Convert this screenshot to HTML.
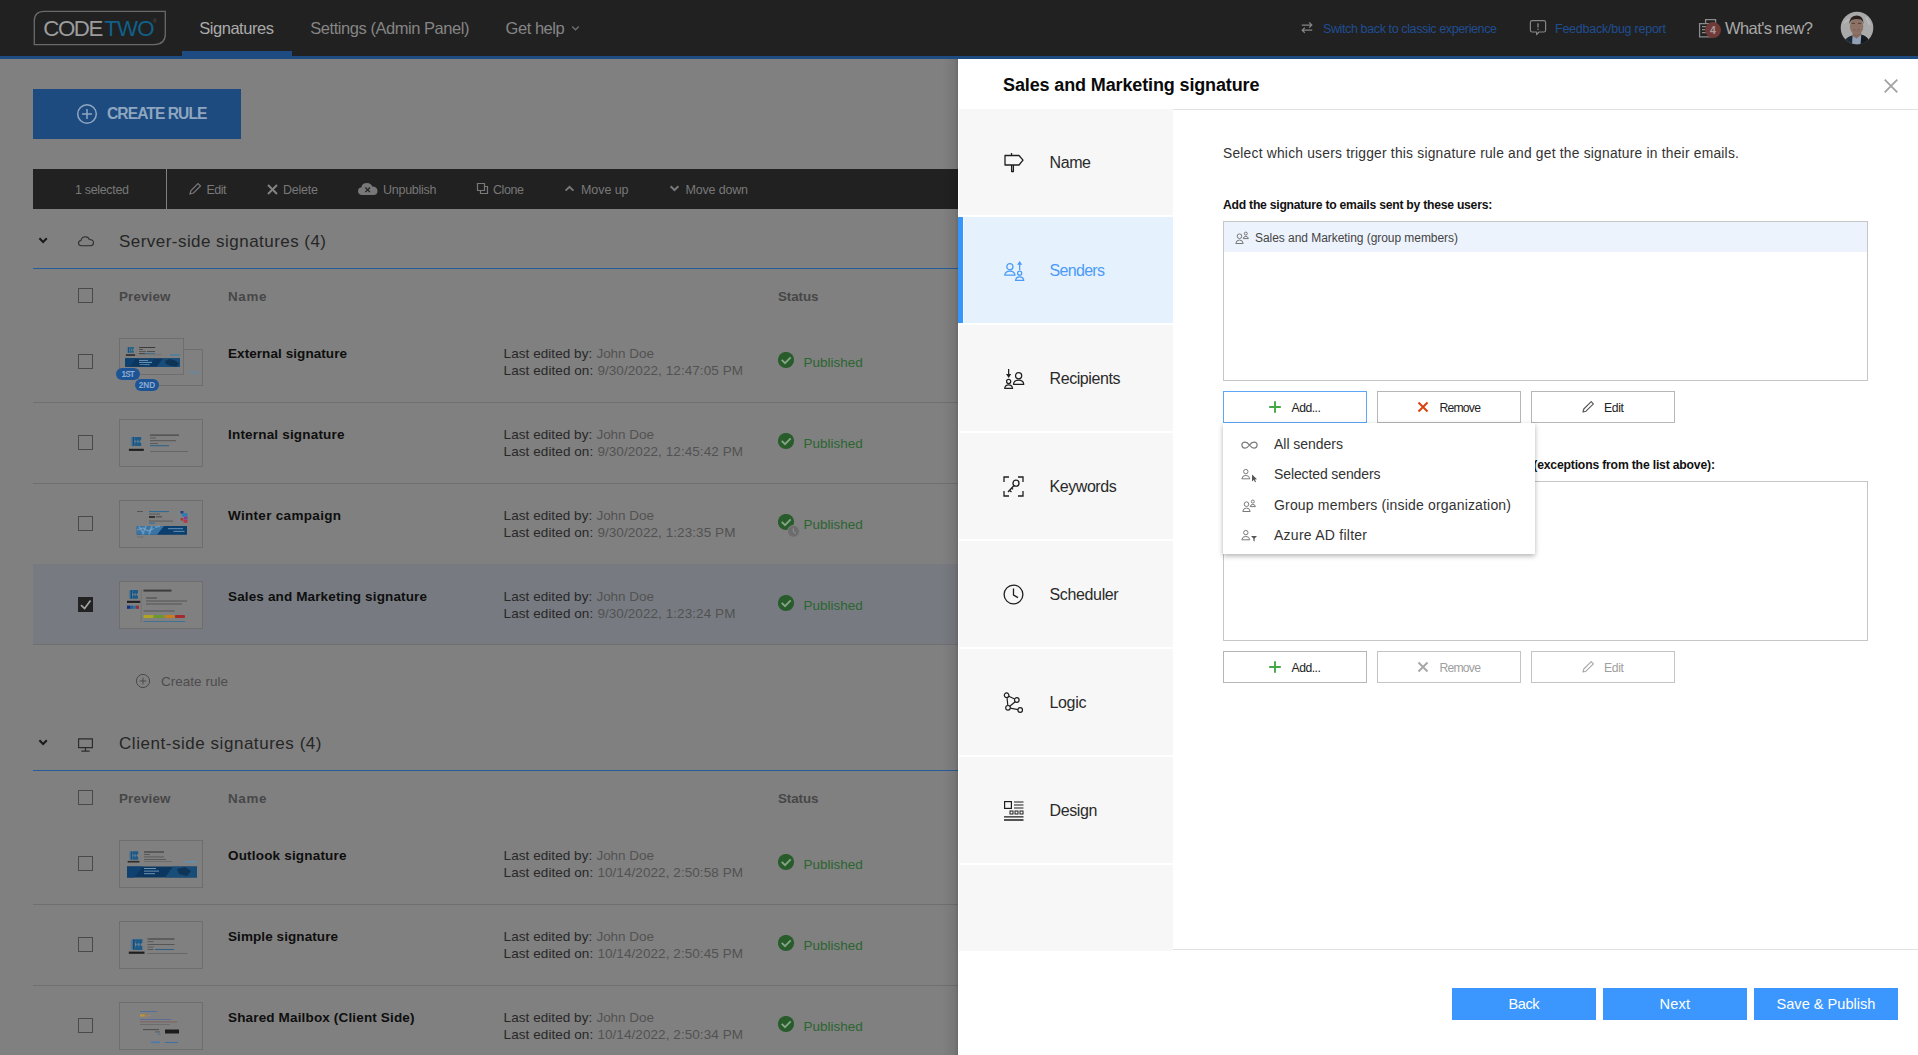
<!DOCTYPE html>
<html lang="en"><head><meta charset="utf-8"><title>CodeTwo Email Signatures - Sales and Marketing signature</title>
<style>
html,body{margin:0;padding:0;}
body{width:1918px;height:1055px;overflow:hidden;position:relative;background:#808080;font-family:"Liberation Sans",sans-serif;}
.t{position:absolute;white-space:nowrap;}
#hdr{position:absolute;left:0;top:0;width:1918px;height:56px;background:#212121;}
#hline{position:absolute;left:0;top:56px;width:1918px;height:3px;background:#1e4c82;}
#panel{position:absolute;left:958px;top:59px;width:960px;height:996px;background:#fff;}
#pshadow{position:absolute;left:942px;top:59px;width:16px;height:996px;background:linear-gradient(to right,rgba(0,0,0,0) 0%,rgba(0,0,0,0.04) 45%,rgba(0,0,0,0.07) 75%,rgba(0,0,0,0.11) 88%,rgba(0,0,0,0.19) 100%);}
.cb{position:absolute;width:13px;height:13px;border:1px solid #4a4a4a;background:#808080;}
.rowline{position:absolute;left:33px;width:925px;height:1px;background:#6f6f6f;}
.thumb{position:absolute;width:82px;height:45px;border:1px solid #6e6e6e;background:#808080;overflow:hidden;}
.nav{position:absolute;left:959px;width:214px;height:106px;background:#f7f7f7;}
.btn{position:absolute;height:30px;border:1px solid #b4b4b4;background:#fff;}
.lb{position:absolute;left:1223px;width:643px;height:158px;border:1px solid #c6c6c6;background:#fff;}
.bb{position:absolute;top:988px;height:32px;width:144px;background:#3b97fd;}
</style></head><body>
<div id="hdr"></div><div id="hline"></div>
<svg style="position:absolute;left:33px;top:10px;" width="134" height="36" viewBox="0 0 134 36" fill="none"><path d="M11.2 1.3 H132.3 V24 Q132.3 34.6 121 34.6 H1.3 V11 Q1.3 1.3 11.2 1.3 Z" stroke="#6a6a6a" stroke-width="1.3"/></svg>
<span class="t" style="left:43.2px;top:13.4px;font-size:22.3px;line-height:31px;color:#9c9c9c;letter-spacing:-1.410px;">CODE</span>
<span class="t" style="left:104.3px;top:13.4px;font-size:22.3px;line-height:31px;color:#10608a;letter-spacing:-0.857px;">TWO</span>
<span class="t" style="left:153.0px;top:17.5px;font-size:5px;line-height:7px;color:#555;">®</span>
<div style="position:absolute;left:182px;top:51px;width:110px;height:5px;background:#1e4c82;"></div>
<span class="t" style="left:199.3px;top:17.0px;font-size:16.5px;line-height:23px;color:#ababab;letter-spacing:-0.476px;">Signatures</span>
<span class="t" style="left:310.3px;top:17.0px;font-size:16.5px;line-height:23px;color:#858585;letter-spacing:-0.455px;">Settings (Admin Panel)</span>
<span class="t" style="left:505.6px;top:17.0px;font-size:16.5px;line-height:23px;color:#858585;letter-spacing:-0.468px;">Get help</span>
<svg style="position:absolute;left:571px;top:25px;" width="9" height="7" viewBox="0 0 9 7" fill="none"><path d="M1.2 1.5 L4.5 4.8 L7.8 1.5" stroke="#707070" stroke-width="1.3"/></svg>
<svg style="position:absolute;left:1300px;top:21px;" width="14" height="14" viewBox="0 0 14 14" fill="none"><path d="M1.8 4H11.6M9.2 1.4 11.8 4 9.2 6.6M12.2 9.2H2.4M4.8 6.6 2.2 9.2 4.8 11.8" stroke="#858585" stroke-width="1.25"/></svg>
<span class="t" style="left:1323.0px;top:19.5px;font-size:12.5px;line-height:18px;color:#1f4d92;letter-spacing:-0.381px;">Switch back to classic experience</span>
<svg style="position:absolute;left:1529px;top:19px;" width="18" height="18" viewBox="0 0 18 18" fill="none"><path d="M3.2 1.6H14.8Q16.6 1.6 16.6 3.4V11.2Q16.6 13 14.8 13H10L7.6 15.6V13H3.2Q1.4 13 1.4 11.2V3.4Q1.4 1.6 3.2 1.6Z" stroke="#858585" stroke-width="1.2" stroke-linejoin="round"/><path d="M9 4.2V8.4M9 9.8V11" stroke="#858585" stroke-width="1.4"/></svg>
<span class="t" style="left:1555.0px;top:19.5px;font-size:12.5px;line-height:18px;color:#1f4d92;letter-spacing:-0.242px;">Feedback/bug report</span>
<svg style="position:absolute;left:1697px;top:18px;" width="28" height="22" viewBox="0 0 28 22" fill="none"><path d="M8.6 5.6V1.6H18.6V10M2.6 5.7H14V18.8H2.6Z" stroke="#8c8c8c" stroke-width="1.3"/><path d="M5 8.6H9.5M5 11.6H9.5M5 14.6H9.5" stroke="#8c8c8c" stroke-width="1.1"/><circle cx="16" cy="12.1" r="8" fill="#703a38"/></svg>
<span class="t" style="left:1710.0px;top:22.7px;font-size:10.5px;line-height:15px;color:#a89c9c;font-weight:bold;">4</span>
<span class="t" style="left:1725.0px;top:17.0px;font-size:16.5px;line-height:23px;color:#a8a8a8;letter-spacing:-0.594px;">What&#x27;s new?</span>
<svg style="position:absolute;left:1840px;top:11px;" width="34" height="34" viewBox="0 0 34 34" fill="none"><defs><clipPath id="av"><circle cx="17" cy="17" r="16.3"/></clipPath></defs><g clip-path="url(#av)"><rect width="34" height="34" fill="#a9a9a9"/><path d="M4 12 L9 8 M26 6 L30 14" stroke="#b8b8b8" stroke-width="2"/><path d="M3 34 Q4 26.5 12.5 24.2 L16.5 28 L21 23.5 Q29.5 26 31 34Z" fill="#1b2836"/><path d="M21 23.5 Q29.5 26 31 34 H20Z" fill="#141922"/><path d="M12.6 24 L12 34 H20.5 L21.4 22.5 L16.5 26Z" fill="#93a0b3"/><path d="M12.4 20 L12.8 25 L16.5 27.5 L21 24 L21.2 20Z" fill="#846a5e"/><ellipse cx="16.6" cy="15.4" rx="6.7" ry="8.3" fill="#8d7266"/><path d="M9.6 13.5 Q9 4.6 16.4 4.4 Q23.8 4.4 23.6 13.2 Q22.6 8.6 19.5 8.2 Q13.4 7.2 11.2 9.4 Q10 11 9.6 13.5Z" fill="#2a211e"/><path d="M11.6 12.4 H15 M18 12.4 H21.4" stroke="#5d463c" stroke-width="1.1"/><path d="M13.3 18.8 Q16.6 21.4 19.9 18.6 Q16.6 19.6 13.3 18.8Z" fill="#c9c2bf" stroke="#6a4a40" stroke-width="0.5"/></g></svg>
<div style="position:absolute;left:33px;top:89px;width:208px;height:50px;background:#1d4b7f;"></div>
<svg style="position:absolute;left:76px;top:103px;" width="22" height="22" viewBox="0 0 22 22" fill="none"><circle cx="11" cy="11" r="9.3" stroke="#8fa6c0" stroke-width="1.5"/><path d="M11 6V16M6 11H16" stroke="#8fa6c0" stroke-width="1.5"/></svg>
<span class="t" style="left:107.0px;top:103.3px;font-size:15.6px;line-height:22px;color:#8fa6c0;letter-spacing:-0.928px;font-weight:bold;">CREATE RULE</span>
<div style="position:absolute;left:33px;top:169px;width:925px;height:40px;background:#212121;"></div>
<div style="position:absolute;left:166px;top:169px;width:1px;height:40px;background:#808080;"></div>
<span class="t" style="left:75.0px;top:180.5px;font-size:12.5px;line-height:18px;color:#787878;letter-spacing:-0.331px;">1 selected</span>
<svg style="position:absolute;left:188px;top:182px;" width="14" height="14" viewBox="0 0 14 14" fill="none"><path d="M2 12 L3 8.5 L10 1.5 L12.5 4 L5.5 11 Z" stroke="#787878" stroke-width="1.2"/></svg>
<span class="t" style="left:206.5px;top:180.5px;font-size:12.5px;line-height:18px;color:#787878;letter-spacing:-0.513px;">Edit</span>
<svg style="position:absolute;left:266px;top:183px;" width="13" height="13" viewBox="0 0 13 13" fill="none"><path d="M2 2 L11 11 M11 2 L2 11" stroke="#828282" stroke-width="2"/></svg>
<span class="t" style="left:283.0px;top:180.5px;font-size:12.5px;line-height:18px;color:#787878;letter-spacing:-0.227px;">Delete</span>
<svg style="position:absolute;left:357px;top:181px;" width="22" height="16" viewBox="0 0 22 16" fill="none"><path d="M5.5 14 Q1 14 1 10 Q1 6.8 4.3 6.4 Q5 2 10 2 Q14 2 15.3 5.6 Q20.5 5.8 20.5 10 Q20.5 14 16.5 14Z" fill="#787878"/><path d="M8.3 6.5 L13 11.2 M13 6.5 L8.3 11.2" stroke="#212121" stroke-width="1.2"/></svg>
<span class="t" style="left:383.0px;top:180.5px;font-size:12.5px;line-height:18px;color:#787878;letter-spacing:-0.262px;">Unpublish</span>
<svg style="position:absolute;left:476px;top:182px;" width="13" height="13" viewBox="0 0 13 13" fill="none"><path d="M1.5 1.5H8.5V8.5H1.5Z M4.5 8.5V11.5H11.5V4.5H8.5" stroke="#787878" stroke-width="1.2"/></svg>
<span class="t" style="left:493.0px;top:180.5px;font-size:12.5px;line-height:18px;color:#787878;letter-spacing:-0.415px;">Clone</span>
<svg style="position:absolute;left:563px;top:183px;" width="13" height="11" viewBox="0 0 13 11" fill="none"><path d="M2.6 7.6 L6.5 3.8 L10.4 7.6" stroke="#787878" stroke-width="2"/></svg>
<span class="t" style="left:581.0px;top:180.5px;font-size:12.5px;line-height:18px;color:#787878;letter-spacing:-0.074px;">Move up</span>
<svg style="position:absolute;left:668px;top:183px;" width="13" height="11" viewBox="0 0 13 11" fill="none"><path d="M2.6 3.2 L6.5 7 L10.4 3.2" stroke="#787878" stroke-width="2"/></svg>
<span class="t" style="left:685.5px;top:180.5px;font-size:12.5px;line-height:18px;color:#787878;letter-spacing:-0.178px;">Move down</span>
<svg style="position:absolute;left:37px;top:235px;" width="12" height="10" viewBox="0 0 12 10" fill="none"><path d="M2.4 3.2 L6.1 7 L9.8 3.2" stroke="#1a1a1a" stroke-width="2"/></svg>
<svg style="position:absolute;left:77px;top:235px;" width="18" height="13" viewBox="0 0 18 13" fill="none"><path d="M4.6 10.7 Q1.5 10.7 1.5 8 Q1.5 5.8 4 5.4 Q4.8 1.7 8.4 1.7 Q11.4 1.7 12.4 4.6 Q16.5 4.7 16.5 7.8 Q16.5 10.7 13.6 10.7Z" stroke="#2b2b2b" stroke-width="1.05"/></svg>
<span class="t" style="left:119.0px;top:229.6px;font-size:17px;line-height:24px;color:#262626;letter-spacing:0.457px;">Server-side signatures (4)</span>
<div style="position:absolute;left:33px;top:268px;width:925px;height:1px;background:#245c9c;"></div>
<div class="cb" style="left:78px;top:288px"></div>
<span class="t" style="left:119.0px;top:286.8px;font-size:13.4px;line-height:19px;color:#474747;letter-spacing:0.141px;font-weight:bold;">Preview</span>
<span class="t" style="left:228.0px;top:286.8px;font-size:13.4px;line-height:19px;color:#474747;letter-spacing:0.668px;font-weight:bold;">Name</span>
<span class="t" style="left:778.0px;top:286.8px;font-size:13.4px;line-height:19px;color:#474747;letter-spacing:-0.091px;font-weight:bold;">Status</span>
<svg style="position:absolute;left:37px;top:737px;" width="12" height="10" viewBox="0 0 12 10" fill="none"><path d="M2.4 3.2 L6.1 7 L9.8 3.2" stroke="#1a1a1a" stroke-width="2"/></svg>
<svg style="position:absolute;left:77px;top:736px;" width="18" height="16" viewBox="0 0 18 16" fill="none"><path d="M1.6 2.8H15.4V11.6H1.6Z M8.5 11.6V14.8 M4.4 15.1H12.6" stroke="#2b2b2b" stroke-width="1.15"/></svg>
<span class="t" style="left:119.0px;top:731.6px;font-size:17px;line-height:24px;color:#262626;letter-spacing:0.541px;">Client-side signatures (4)</span>
<div style="position:absolute;left:33px;top:770px;width:925px;height:1px;background:#245c9c;"></div>
<div class="cb" style="left:78px;top:790px"></div>
<span class="t" style="left:119.0px;top:788.8px;font-size:13.4px;line-height:19px;color:#474747;letter-spacing:0.141px;font-weight:bold;">Preview</span>
<span class="t" style="left:228.0px;top:788.8px;font-size:13.4px;line-height:19px;color:#474747;letter-spacing:0.668px;font-weight:bold;">Name</span>
<span class="t" style="left:778.0px;top:788.8px;font-size:13.4px;line-height:19px;color:#474747;letter-spacing:-0.091px;font-weight:bold;">Status</span>
<div class="cb" style="left:78px;top:354px"></div>
<div style="position:absolute;left:138px;top:349px;width:65px;height:37px;border:1px solid #6e6e6e;box-sizing:border-box;background:#808080;"></div><svg style="position:absolute;left:138px;top:349px;" width="65" height="37" viewBox="0 0 65 37" fill="none"><rect x="51" y="22.6" width="10" height="1.7" fill="#5f8aa6" opacity=".85"/></svg><div style="position:absolute;left:119px;top:338px;width:65px;height:37px;border:1px solid #6e6e6e;box-sizing:border-box;background:#808080;"></div><svg style="position:absolute;left:119px;top:338px;" width="65" height="37" viewBox="0 0 65 37" fill="none"><g transform="translate(7.9,9.1) scale(7,5.7)"><rect x="0" y="0.03" width="0.17" height="0.94" fill="#587690"/><rect x="0.17" y="0" width="0.17" height="1" fill="#0d4f85"/><path d="M0.37 0H1V0.3L0.82 0.5 1 0.7V1H0.37V0.7L0.52 0.5 0.37 0.3Z" fill="#1d5f85" opacity=".9"/><path d="M0.52 0.5L0.68 0.3 0.82 0.5 0.68 0.7Z" fill="#6f95b0" opacity=".55"/></g><rect x="6.9" y="16.2" width="9.2" height="1.7" fill="#303030"/><rect x="17.6" y="9" width="0.5" height="9" fill="#777"/><rect x="20" y="9.2" width="16.2" height="0.8" fill="#2a2a2a"/><rect x="20" y="11.1" width="4" height="0.7" fill="#3a3a3a"/><rect x="20" y="13.1" width="7" height="0.7" fill="#444"/><rect x="28" y="13.1" width="8" height="0.7" fill="#383838"/><rect x="20" y="15.2" width="6" height="0.8" fill="#3a3a3a"/><rect x="26" y="15.2" width="10" height="0.8" fill="#2f6a93"/><rect x="20" y="16.6" width="23" height="0.5" fill="#666"/><rect x="51" y="16.2" width="10" height="1.7" fill="#4d809f"/><rect x="6.2" y="20.2" width="54.8" height="8.7" fill="#0a3660"/><path d="M6.2 20.2H17L10.5 28.9H6.2Z" fill="#0e416f"/><path d="M30 20.2H36L29.5 28.9H23.5Z" fill="#0f4474" opacity=".7"/><path d="M44 20.2H61V28.9H37.5Z" fill="#1c5380" opacity=".8"/><path d="M46 23 L51 21 L56 22.5 L60 25.5 L58 28.5 L52 28 L47 26Z" fill="#08243f" opacity=".6"/><rect x="20" y="21.9" width="9" height="0.9" fill="#7aa3c6"/><rect x="20" y="23.9" width="13" height="0.9" fill="#7aa3c6"/><rect x="20.6" y="26.2" width="10" height="0.8" fill="#5f8cb3"/></svg><div style="position:absolute;left:116px;top:368px;width:24px;height:12px;background:#1c5496;border-radius:6px;"></div><span class="t" style="left:121.6px;top:368.7px;font-size:8.2px;line-height:11px;color:#8eabd0;letter-spacing:-0.870px;font-weight:bold;">1ST</span><div style="position:absolute;left:135px;top:379px;width:24px;height:12px;background:#1c5496;border-radius:6px;"></div><span class="t" style="left:138.7px;top:379.6px;font-size:8.2px;line-height:11px;color:#8eabd0;letter-spacing:-0.002px;font-weight:bold;">2ND</span>
<span class="t" style="left:228.0px;top:343.8px;font-size:13.5px;line-height:19px;color:#0e0e0e;letter-spacing:0.071px;font-weight:bold;">External signature</span>
<span class="t" style="left:503.6px;top:343.6px;font-size:13.5px;line-height:19px;color:#282828;letter-spacing:0.056px;">Last edited by:</span>
<span class="t" style="left:596.4px;top:343.6px;font-size:13.5px;line-height:19px;color:#525252;letter-spacing:-0.013px;">John Doe</span>
<span class="t" style="left:503.6px;top:361.1px;font-size:13.5px;line-height:19px;color:#282828;letter-spacing:0.074px;">Last edited on:</span>
<span class="t" style="left:597.4px;top:361.1px;font-size:13.5px;line-height:19px;color:#525252;letter-spacing:0.071px;">9/30/2022, 12:47:05 PM</span>
<svg style="position:absolute;left:778px;top:352px;" width="24" height="24" viewBox="0 0 24 24" fill="none"><circle cx="8" cy="8" r="8.1" fill="#285c2b"/><path d="M3.7 7.9 L7 11.1 L12.7 5.3" stroke="#86a487" stroke-width="1.9"/></svg>
<span class="t" style="left:803.4px;top:352.5px;font-size:13.5px;line-height:19px;color:#2b6530;letter-spacing:0.001px;">Published</span>
<div class="rowline" style="top:402px"></div>
<div class="cb" style="left:78px;top:435px"></div>
<div style="position:absolute;left:119px;top:419px;width:84px;height:48px;border:1px solid #6e6e6e;box-sizing:border-box;background:#808080;"></div><svg style="position:absolute;left:119px;top:419px;" width="84" height="48" viewBox="0 0 84 48" fill="none"><g transform="translate(11.8,17.9) scale(10.4,9.2)"><rect x="0" y="0.03" width="0.17" height="0.94" fill="#587690"/><rect x="0.17" y="0" width="0.17" height="1" fill="#0d4f85"/><path d="M0.37 0H1V0.3L0.82 0.5 1 0.7V1H0.37V0.7L0.52 0.5 0.37 0.3Z" fill="#14568a" opacity=".9"/><path d="M0.52 0.5L0.68 0.3 0.82 0.5 0.68 0.7Z" fill="#6f95b0" opacity=".55"/></g><rect x="9.9" y="29.8" width="14.9" height="2.1" fill="#1e1e1e"/><rect x="31" y="15.6" width="29" height="1" fill="#3a3a3a"/><rect x="31" y="18.5" width="6" height="0.9" fill="#555"/><rect x="31" y="21.2" width="26" height="1" fill="#555"/><rect x="31" y="24" width="8" height="1" fill="#5a5a5a"/><rect x="31" y="26.2" width="19" height="1" fill="#2d5f86"/><rect x="31" y="32" width="38" height="1" fill="#666"/></svg>
<span class="t" style="left:228.0px;top:424.8px;font-size:13.5px;line-height:19px;color:#0e0e0e;letter-spacing:0.190px;font-weight:bold;">Internal signature</span>
<span class="t" style="left:503.6px;top:424.6px;font-size:13.5px;line-height:19px;color:#282828;letter-spacing:0.056px;">Last edited by:</span>
<span class="t" style="left:596.4px;top:424.6px;font-size:13.5px;line-height:19px;color:#525252;letter-spacing:-0.013px;">John Doe</span>
<span class="t" style="left:503.6px;top:442.1px;font-size:13.5px;line-height:19px;color:#282828;letter-spacing:0.074px;">Last edited on:</span>
<span class="t" style="left:597.4px;top:442.1px;font-size:13.5px;line-height:19px;color:#525252;letter-spacing:0.071px;">9/30/2022, 12:45:42 PM</span>
<svg style="position:absolute;left:778px;top:433px;" width="24" height="24" viewBox="0 0 24 24" fill="none"><circle cx="8" cy="8" r="8.1" fill="#285c2b"/><path d="M3.7 7.9 L7 11.1 L12.7 5.3" stroke="#86a487" stroke-width="1.9"/></svg>
<span class="t" style="left:803.4px;top:433.5px;font-size:13.5px;line-height:19px;color:#2b6530;letter-spacing:0.001px;">Published</span>
<div class="rowline" style="top:483px"></div>
<div class="cb" style="left:78px;top:516px"></div>
<div style="position:absolute;left:119px;top:500px;width:84px;height:48px;border:1px solid #6e6e6e;box-sizing:border-box;background:#808080;"></div><svg style="position:absolute;left:119px;top:500px;" width="84" height="48" viewBox="0 0 84 48" fill="none"><rect x="18" y="11" width="6" height="1" fill="#555"/><rect x="30" y="11" width="20" height="1.1" fill="#2d6a96"/><rect x="30" y="13.6" width="11" height="0.9" fill="#555"/><rect x="30" y="16" width="6" height="2" fill="#333"/><rect x="37" y="16.4" width="6" height="0.9" fill="#444"/><rect x="30" y="20.6" width="24" height="0.9" fill="#555"/><rect x="30" y="22.6" width="6" height="1" fill="#2d6a96"/><rect x="59.6" y="11" width="0.6" height="12" fill="#6f8fa6"/><rect x="61.5" y="11" width="3" height="2.6" fill="#273a80"/><rect x="63" y="13.2" width="5.5" height="3.4" fill="#2d7db5"/><rect x="65" y="16.6" width="3.5" height="3" fill="#8a3c8c"/><rect x="61.5" y="18" width="3" height="2.6" fill="#a43b3b"/><rect x="64.5" y="20" width="4" height="2.8" fill="#b03a48"/><rect x="17.8" y="26" width="50.2" height="8.8" fill="#0c3f6d"/><path d="M17.8 26H45L38 34.8H17.8Z" fill="#3a74a4"/><path d="M20 26.5 L25 34 M27 26L23.5 34.5 M33 26 L30 34.5 M36 27 L41 26.2" stroke="#6f9bc0" stroke-width="1.8" opacity=".85"/><path d="M18 30 L24 28 L29 31 L35 28.5" stroke="#86aac8" stroke-width="1.2" opacity=".7"/><rect x="49" y="28" width="15" height="1.2" fill="#5583aa"/><rect x="54.5" y="30.8" width="11" height="1.2" fill="#5583aa"/><rect x="18" y="36.6" width="6.5" height="0.8" fill="#666"/></svg>
<span class="t" style="left:228.0px;top:505.8px;font-size:13.5px;line-height:19px;color:#0e0e0e;letter-spacing:0.311px;font-weight:bold;">Winter campaign</span>
<span class="t" style="left:503.6px;top:505.6px;font-size:13.5px;line-height:19px;color:#282828;letter-spacing:0.056px;">Last edited by:</span>
<span class="t" style="left:596.4px;top:505.6px;font-size:13.5px;line-height:19px;color:#525252;letter-spacing:-0.013px;">John Doe</span>
<span class="t" style="left:503.6px;top:523.1px;font-size:13.5px;line-height:19px;color:#282828;letter-spacing:0.074px;">Last edited on:</span>
<span class="t" style="left:597.4px;top:523.1px;font-size:13.5px;line-height:19px;color:#525252;letter-spacing:0.070px;">9/30/2022, 1:23:35 PM</span>
<svg style="position:absolute;left:778px;top:514px;" width="24" height="24" viewBox="0 0 24 24" fill="none"><circle cx="8" cy="8" r="8.1" fill="#285c2b"/><path d="M3.7 7.9 L7 11.1 L12.7 5.3" stroke="#86a487" stroke-width="1.9"/><circle cx="15.5" cy="17.3" r="5.9" fill="#6c6c6c" stroke="#808080" stroke-width="1"/><path d="M15.3 14.2 V17.6 L17.7 19.5" stroke="#8e8e8e" stroke-width="1.1"/></svg>
<span class="t" style="left:803.4px;top:514.5px;font-size:13.5px;line-height:19px;color:#2b6530;letter-spacing:0.001px;">Published</span>
<div style="position:absolute;left:33px;top:564px;width:925px;height:80px;background:#777b81;"></div>
<div style="position:absolute;left:78px;top:597px;width:15px;height:15px;background:#222;"></div>
<svg style="position:absolute;left:78px;top:597px;" width="15" height="15" viewBox="0 0 15 15" fill="none"><path d="M3 8.1 L6.6 11.5 L12.5 3.6" stroke="#a4a4a4" stroke-width="1.7"/></svg>
<div style="position:absolute;left:119px;top:581px;width:84px;height:48px;border:1px solid #6e6e6e;box-sizing:border-box;background:#808080;"></div><svg style="position:absolute;left:119px;top:581px;" width="84" height="48" viewBox="0 0 84 48" fill="none"><g transform="translate(9.9,9) scale(9.1,8.8)"><rect x="0" y="0.03" width="0.17" height="0.94" fill="#587690"/><rect x="0.17" y="0" width="0.17" height="1" fill="#0d4f85"/><path d="M0.37 0H1V0.3L0.82 0.5 1 0.7V1H0.37V0.7L0.52 0.5 0.37 0.3Z" fill="#14568a" opacity=".9"/><path d="M0.52 0.5L0.68 0.3 0.82 0.5 0.68 0.7Z" fill="#6f95b0" opacity=".55"/></g><rect x="8" y="19.8" width="13.2" height="2.1" fill="#1e1e1e"/><rect x="8" y="24.6" width="3" height="3.2" fill="#152f7a"/><rect x="11" y="24.6" width="3" height="3.2" fill="#1f5f95"/><rect x="14" y="24.6" width="3" height="3.2" fill="#3a6c9c"/><rect x="17" y="24.6" width="3" height="3.2" fill="#9a2f3a"/><rect x="21.8" y="8.5" width="0.6" height="33" fill="#6a6a6a"/><rect x="24.5" y="8.6" width="28" height="2" fill="#3c3c3c"/><rect x="27" y="16.5" width="11" height="1" fill="#444"/><rect x="27" y="19.5" width="41" height="1" fill="#555"/><rect x="27" y="22.5" width="36" height="1" fill="#555"/><rect x="24.5" y="29.5" width="31" height="1" fill="#555"/><rect x="24.5" y="34" width="10" height="3" rx="1" fill="#b0a520"/><rect x="35" y="34" width="10" height="3" rx="1" fill="#6b9a2c"/><rect x="45.5" y="34" width="10" height="3" rx="1" fill="#c4801e"/><rect x="56" y="34" width="10" height="3" rx="1" fill="#a52a2e"/><rect x="24.5" y="40" width="42" height="0.9" fill="#3c6f95"/></svg>
<span class="t" style="left:228.0px;top:586.8px;font-size:13.5px;line-height:19px;color:#0e0e0e;letter-spacing:0.141px;font-weight:bold;">Sales and Marketing signature</span>
<span class="t" style="left:503.6px;top:586.6px;font-size:13.5px;line-height:19px;color:#282828;letter-spacing:0.056px;">Last edited by:</span>
<span class="t" style="left:596.4px;top:586.6px;font-size:13.5px;line-height:19px;color:#525252;letter-spacing:-0.013px;">John Doe</span>
<span class="t" style="left:503.6px;top:604.1px;font-size:13.5px;line-height:19px;color:#282828;letter-spacing:0.074px;">Last edited on:</span>
<span class="t" style="left:597.4px;top:604.1px;font-size:13.5px;line-height:19px;color:#525252;letter-spacing:0.070px;">9/30/2022, 1:23:24 PM</span>
<svg style="position:absolute;left:778px;top:595px;" width="24" height="24" viewBox="0 0 24 24" fill="none"><circle cx="8" cy="8" r="8.1" fill="#285c2b"/><path d="M3.7 7.9 L7 11.1 L12.7 5.3" stroke="#86a487" stroke-width="1.9"/></svg>
<span class="t" style="left:803.4px;top:595.5px;font-size:13.5px;line-height:19px;color:#2b6530;letter-spacing:0.001px;">Published</span>
<div class="rowline" style="top:644px"></div>
<svg style="position:absolute;left:135px;top:673px;" width="16" height="16" viewBox="0 0 16 16" fill="none"><circle cx="8" cy="8" r="6.6" stroke="#4a4a4a" stroke-width="1"/><path d="M8 4.6V11.4M4.6 8H11.4" stroke="#4a4a4a" stroke-width="1"/></svg>
<span class="t" style="left:161.0px;top:672.0px;font-size:13.5px;line-height:19px;color:#4c4c4c;letter-spacing:0.022px;">Create rule</span>
<div class="cb" style="left:78px;top:856px"></div>
<div style="position:absolute;left:119px;top:840px;width:84px;height:48px;border:1px solid #6e6e6e;box-sizing:border-box;background:#808080;"></div><svg style="position:absolute;left:119px;top:840px;" width="84" height="48" viewBox="0 0 84 48" fill="none"><g transform="translate(10.2,11.3) scale(9,8.5)"><rect x="0" y="0.03" width="0.17" height="0.94" fill="#587690"/><rect x="0.17" y="0" width="0.17" height="1" fill="#0d4f85"/><path d="M0.37 0H1V0.3L0.82 0.5 1 0.7V1H0.37V0.7L0.52 0.5 0.37 0.3Z" fill="#14568a" opacity=".9"/><path d="M0.52 0.5L0.68 0.3 0.82 0.5 0.68 0.7Z" fill="#6f95b0" opacity=".55"/></g><rect x="8.7" y="20.9" width="11.7" height="1.6" fill="#2a2a2a"/><rect x="25" y="11.5" width="20" height="1" fill="#333"/><rect x="25" y="14" width="6" height="0.9" fill="#555"/><rect x="25" y="16.5" width="20" height="0.9" fill="#555"/><rect x="25" y="19" width="22" height="0.9" fill="#555"/><rect x="25" y="21.2" width="28" height="0.8" fill="#666"/><rect x="65" y="21" width="13" height="1.6" fill="#5f8fae"/><rect x="8" y="26.5" width="70" height="11" fill="#0a3660"/><path d="M8 26.5H24L15 37.5H8Z" fill="#0e416f"/><path d="M54 26.5H78V37.5H46Z" fill="#1c5380" opacity=".8"/><path d="M58 29 L66 27 L72 31 L68 36 L60 34Z" fill="#08243f" opacity=".6"/><rect x="25" y="28" width="12" height="1" fill="#6f93b3"/><rect x="25" y="30.6" width="15" height="1" fill="#6f93b3"/><rect x="25" y="33.2" width="11" height="1" fill="#6f93b3"/></svg>
<span class="t" style="left:228.0px;top:845.8px;font-size:13.5px;line-height:19px;color:#0e0e0e;letter-spacing:0.187px;font-weight:bold;">Outlook signature</span>
<span class="t" style="left:503.6px;top:845.6px;font-size:13.5px;line-height:19px;color:#282828;letter-spacing:0.056px;">Last edited by:</span>
<span class="t" style="left:596.4px;top:845.6px;font-size:13.5px;line-height:19px;color:#525252;letter-spacing:-0.013px;">John Doe</span>
<span class="t" style="left:503.6px;top:863.1px;font-size:13.5px;line-height:19px;color:#282828;letter-spacing:0.074px;">Last edited on:</span>
<span class="t" style="left:597.4px;top:863.1px;font-size:13.5px;line-height:19px;color:#525252;letter-spacing:0.071px;">10/14/2022, 2:50:58 PM</span>
<svg style="position:absolute;left:778px;top:854px;" width="24" height="24" viewBox="0 0 24 24" fill="none"><circle cx="8" cy="8" r="8.1" fill="#285c2b"/><path d="M3.7 7.9 L7 11.1 L12.7 5.3" stroke="#86a487" stroke-width="1.9"/></svg>
<span class="t" style="left:803.4px;top:854.5px;font-size:13.5px;line-height:19px;color:#2b6530;letter-spacing:0.001px;">Published</span>
<div class="rowline" style="top:904px"></div>
<div class="cb" style="left:78px;top:937px"></div>
<div style="position:absolute;left:119px;top:921px;width:84px;height:48px;border:1px solid #6e6e6e;box-sizing:border-box;background:#808080;"></div><svg style="position:absolute;left:119px;top:921px;" width="84" height="48" viewBox="0 0 84 48" fill="none"><g transform="translate(11.9,18.2) scale(11.5,10.7)"><rect x="0" y="0.03" width="0.17" height="0.94" fill="#587690"/><rect x="0.17" y="0" width="0.17" height="1" fill="#0d4f85"/><path d="M0.37 0H1V0.3L0.82 0.5 1 0.7V1H0.37V0.7L0.52 0.5 0.37 0.3Z" fill="#14568a" opacity=".9"/><path d="M0.52 0.5L0.68 0.3 0.82 0.5 0.68 0.7Z" fill="#6f95b0" opacity=".55"/></g><rect x="9.8" y="30.6" width="15.7" height="2.2" fill="#1e1e1e"/><rect x="28.5" y="17.5" width="27" height="1" fill="#3a3a3a"/><rect x="28.5" y="20.2" width="6" height="0.9" fill="#555"/><rect x="28.5" y="23" width="27" height="1" fill="#555"/><rect x="28.5" y="25.6" width="6" height="1" fill="#5a5a5a"/><rect x="36" y="28" width="19" height="1" fill="#2d5f86"/><rect x="28.5" y="28" width="6" height="1" fill="#555"/><rect x="28.5" y="32" width="40" height="1" fill="#666"/></svg>
<span class="t" style="left:228.0px;top:926.8px;font-size:13.5px;line-height:19px;color:#0e0e0e;letter-spacing:0.081px;font-weight:bold;">Simple signature</span>
<span class="t" style="left:503.6px;top:926.6px;font-size:13.5px;line-height:19px;color:#282828;letter-spacing:0.056px;">Last edited by:</span>
<span class="t" style="left:596.4px;top:926.6px;font-size:13.5px;line-height:19px;color:#525252;letter-spacing:-0.013px;">John Doe</span>
<span class="t" style="left:503.6px;top:944.1px;font-size:13.5px;line-height:19px;color:#282828;letter-spacing:0.074px;">Last edited on:</span>
<span class="t" style="left:597.4px;top:944.1px;font-size:13.5px;line-height:19px;color:#525252;letter-spacing:0.071px;">10/14/2022, 2:50:45 PM</span>
<svg style="position:absolute;left:778px;top:935px;" width="24" height="24" viewBox="0 0 24 24" fill="none"><circle cx="8" cy="8" r="8.1" fill="#285c2b"/><path d="M3.7 7.9 L7 11.1 L12.7 5.3" stroke="#86a487" stroke-width="1.9"/></svg>
<span class="t" style="left:803.4px;top:935.5px;font-size:13.5px;line-height:19px;color:#2b6530;letter-spacing:0.001px;">Published</span>
<div class="rowline" style="top:985px"></div>
<div class="cb" style="left:78px;top:1018px"></div>
<div style="position:absolute;left:119px;top:1002px;width:84px;height:48px;border:1px solid #6e6e6e;box-sizing:border-box;background:#808080;"></div><svg style="position:absolute;left:119px;top:1002px;" width="84" height="48" viewBox="0 0 84 48" fill="none"><rect x="21" y="9" width="17" height="0.9" fill="#4a6f9a"/><rect x="21" y="12.5" width="2" height="2" fill="#c99a2a"/><rect x="23.5" y="12.5" width="2" height="2" fill="#c99a2a"/><rect x="26" y="12.5" width="2" height="2" fill="#c07a2a"/><rect x="29" y="12.8" width="3" height="1.2" fill="#888"/><rect x="21" y="17" width="31" height="0.9" fill="#5a6a9a"/><rect x="21" y="19.5" width="37" height="0.8" fill="#7a5a5a"/><rect x="21" y="22" width="30" height="0.9" fill="#6a6a6a"/><rect x="24" y="27.2" width="16" height="0.9" fill="#444"/><rect x="36" y="29.5" width="5" height="0.9" fill="#555"/><rect x="39" y="31.8" width="2.5" height="0.9" fill="#3a6fa0"/><rect x="46" y="27.5" width="14" height="4" fill="#1c1c1c"/><rect x="32" y="39.5" width="9" height="1.6" fill="#4a7ab0"/><rect x="46" y="40" width="13" height="1" fill="#3a6fa0"/></svg>
<span class="t" style="left:228.0px;top:1007.8px;font-size:13.5px;line-height:19px;color:#0e0e0e;letter-spacing:0.156px;font-weight:bold;">Shared Mailbox (Client Side)</span>
<span class="t" style="left:503.6px;top:1007.6px;font-size:13.5px;line-height:19px;color:#282828;letter-spacing:0.056px;">Last edited by:</span>
<span class="t" style="left:596.4px;top:1007.6px;font-size:13.5px;line-height:19px;color:#525252;letter-spacing:-0.013px;">John Doe</span>
<span class="t" style="left:503.6px;top:1025.1px;font-size:13.5px;line-height:19px;color:#282828;letter-spacing:0.074px;">Last edited on:</span>
<span class="t" style="left:597.4px;top:1025.1px;font-size:13.5px;line-height:19px;color:#525252;letter-spacing:0.071px;">10/14/2022, 2:50:34 PM</span>
<svg style="position:absolute;left:778px;top:1016px;" width="24" height="24" viewBox="0 0 24 24" fill="none"><circle cx="8" cy="8" r="8.1" fill="#285c2b"/><path d="M3.7 7.9 L7 11.1 L12.7 5.3" stroke="#86a487" stroke-width="1.9"/></svg>
<span class="t" style="left:803.4px;top:1016.5px;font-size:13.5px;line-height:19px;color:#2b6530;letter-spacing:0.001px;">Published</span>
<div id="pshadow"></div><div id="panel"></div>
<span class="t" style="left:1003.0px;top:72.5px;font-size:18px;line-height:25px;color:#0a0a0a;letter-spacing:-0.128px;font-weight:bold;">Sales and Marketing signature</span>
<svg style="position:absolute;left:1884px;top:79px;" width="14" height="14" viewBox="0 0 14 14" fill="none"><path d="M0.7 0.7 L13.3 13.3 M13.3 0.7 L0.7 13.3" stroke="#a2a2a2" stroke-width="1.8"/></svg>
<div style="position:absolute;left:1173px;top:109px;width:745px;height:1px;background:#e2e2e2;"></div>
<div style="position:absolute;left:1173px;top:949px;width:745px;height:1px;background:#e2e2e2;"></div>
<div class="nav" style="top:109px;"></div>
<svg style="position:absolute;left:1003px;top:151.6px;" width="23" height="23" viewBox="0 0 23 23" fill="none"><path d="M8.5 1 V3.5 M2 3.5 H16 L20 8.2 L16 13 H2 Z M8.6 13 V19.5 H10.4 V13" stroke="#1f1f1f" stroke-width="1.3" stroke-linejoin="round"/></svg>
<span class="t" style="left:1049.5px;top:152.1px;font-size:16px;line-height:22px;color:#2a2a2a;letter-spacing:-0.394px;">Name</span>
<div class="nav" style="top:217px;background:#e6f1fe;"></div>
<div style="position:absolute;left:958px;top:217px;width:6px;height:106px;background:#f4f9ff;"></div><div style="position:absolute;left:958px;top:217px;width:5px;height:106px;background:#3796fb;"></div>
<svg style="position:absolute;left:1003px;top:259.6px;" width="23" height="23" viewBox="0 0 23 23" fill="none"><g transform="translate(0.7,0.3) scale(1.03)"><circle cx="6" cy="6.2" r="3" stroke="#4a9bf7" stroke-width="1.2"/><path d="M1 14.5 Q1.5 10.5 6 10.5 Q10.5 10.5 11 14.5 Z" stroke="#4a9bf7" stroke-width="1.2" stroke-linejoin="round"/><circle cx="15.5" cy="12.5" r="2" stroke="#4a9bf7" stroke-width="1.2"/><path d="M11.5 19.5 Q12 16 15.5 16 Q19 16 19.5 19.5 Z" stroke="#4a9bf7" stroke-width="1.2" stroke-linejoin="round"/><path d="M15.5 9.5 V3" stroke="#4a9bf7" stroke-width="1.2"/><path d="M13 4.4 L15.5 0.6 L18 4.4 Z" fill="#4a9bf7"/></g></svg>
<span class="t" style="left:1049.5px;top:260.1px;font-size:16px;line-height:22px;color:#4a9bf7;letter-spacing:-0.683px;">Senders</span>
<div class="nav" style="top:325px;"></div>
<svg style="position:absolute;left:1003px;top:367.6px;" width="23" height="23" viewBox="0 0 23 23" fill="none"><g transform="translate(0.7,0.3) scale(1.03)"><circle cx="14.5" cy="7.2" r="3" stroke="#1f1f1f" stroke-width="1.2"/><path d="M9.5 15.5 Q10 11.5 14.5 11.5 Q19 11.5 19.5 15.5 Z" stroke="#1f1f1f" stroke-width="1.2" stroke-linejoin="round"/><circle cx="4.8" cy="12.8" r="2" stroke="#1f1f1f" stroke-width="1.2"/><path d="M1 19.5 Q1.5 16.2 4.8 16.2 Q8.1 16.2 8.6 19.5 Z" stroke="#1f1f1f" stroke-width="1.2" stroke-linejoin="round"/><path d="M4.8 0.8 V7" stroke="#1f1f1f" stroke-width="1.2"/><path d="M2.3 5.6 L4.8 9.4 L7.3 5.6 Z" fill="#1f1f1f"/></g></svg>
<span class="t" style="left:1049.5px;top:368.1px;font-size:16px;line-height:22px;color:#2a2a2a;letter-spacing:-0.412px;">Recipients</span>
<div class="nav" style="top:433px;"></div>
<svg style="position:absolute;left:1003px;top:475.6px;" width="23" height="23" viewBox="0 0 23 23" fill="none"><path d="M1 6 V1 H6 M15 1 H20 V6 M20 15 V20 H15 M6 20 H1 V15" stroke="#1f1f1f" stroke-width="1.3"/><circle cx="13" cy="7.2" r="3" stroke="#1f1f1f" stroke-width="1.3"/><path d="M11 9.5 L5 16 M6.5 14.2 L8.5 16 M8.6 12 L10 13.3" stroke="#1f1f1f" stroke-width="1.3"/></svg>
<span class="t" style="left:1049.5px;top:476.1px;font-size:16px;line-height:22px;color:#2a2a2a;letter-spacing:-0.436px;">Keywords</span>
<div class="nav" style="top:541px;"></div>
<svg style="position:absolute;left:1003px;top:583.6px;" width="23" height="23" viewBox="0 0 23 23" fill="none"><circle cx="10.5" cy="10.5" r="9.4" stroke="#1f1f1f" stroke-width="1.3"/><path d="M10.5 4.5 V11 L15 13.6" stroke="#1f1f1f" stroke-width="1.3"/></svg>
<span class="t" style="left:1049.5px;top:584.1px;font-size:16px;line-height:22px;color:#2a2a2a;letter-spacing:-0.356px;">Scheduler</span>
<div class="nav" style="top:649px;"></div>
<svg style="position:absolute;left:1003px;top:691.6px;" width="23" height="23" viewBox="0 0 23 23" fill="none"><circle cx="3.6" cy="3.2" r="2.3" stroke="#1f1f1f" stroke-width="1.2"/><circle cx="13.8" cy="8" r="2.3" stroke="#1f1f1f" stroke-width="1.2"/><circle cx="5" cy="15.8" r="2.3" stroke="#1f1f1f" stroke-width="1.2"/><circle cx="17.2" cy="18" r="2.3" stroke="#1f1f1f" stroke-width="1.2"/><path d="M5.7 4.2 L11.7 7 M4 5.5 L4.8 13.5 M6.8 14.3 L12.2 9.7 M7.3 16.2 L15 17.6" stroke="#1f1f1f" stroke-width="1.2"/></svg>
<span class="t" style="left:1049.5px;top:692.1px;font-size:16px;line-height:22px;color:#2a2a2a;letter-spacing:-0.338px;">Logic</span>
<div class="nav" style="top:757px;"></div>
<svg style="position:absolute;left:1003px;top:799.6px;" width="23" height="23" viewBox="0 0 23 23" fill="none"><rect x="1.6" y="1.6" width="6.8" height="6.8" stroke="#1f1f1f" stroke-width="1.2"/><path d="M11 2 H20.5 M11 5 H20.5 M11 8 H20.5" stroke="#1f1f1f" stroke-width="1.2"/><rect x="7" y="11" width="3" height="3" stroke="#1f1f1f" stroke-width="1"/><rect x="12" y="11" width="3" height="3" stroke="#1f1f1f" stroke-width="1"/><rect x="17" y="11" width="3" height="3" stroke="#1f1f1f" stroke-width="1"/><path d="M1 16.8 H20.5 M1 20 H20.5" stroke="#1f1f1f" stroke-width="1.3"/></svg>
<span class="t" style="left:1049.5px;top:800.1px;font-size:16px;line-height:22px;color:#2a2a2a;letter-spacing:-0.381px;">Design</span>
<div class="nav" style="top:865px;height:86px"></div>
<span class="t" style="left:1223.0px;top:143.6px;font-size:13.8px;line-height:19px;color:#333;letter-spacing:0.225px;">Select which users trigger this signature rule and get the signature in their emails.</span>
<span class="t" style="left:1223.0px;top:196.5px;font-size:12.2px;line-height:17px;color:#111;letter-spacing:-0.252px;font-weight:bold;">Add the signature to emails sent by these users:</span>
<div class="lb" style="top:221px"></div>
<div style="position:absolute;left:1224px;top:222px;width:643px;height:30px;background:#edf3fd;"></div>
<svg style="position:absolute;left:1235px;top:231px;" width="15" height="14" viewBox="0 0 15 14" fill="none"><circle cx="4.5" cy="5.2" r="2.3" stroke="#777" stroke-width="1"/><path d="M0.8 12.5 Q1.2 9 4.5 9 Q7.8 9 8.2 12.5 Z" stroke="#777" stroke-width="1" stroke-linejoin="round"/><circle cx="10.8" cy="2.6" r="1.5" stroke="#777" stroke-width="1"/><path d="M8.2 7.6 Q8.6 5.4 10.8 5.4 Q13 5.4 13.4 7.6 Z" stroke="#777" stroke-width="1" stroke-linejoin="round"/></svg>
<span class="t" style="left:1255.0px;top:229.9px;font-size:12px;line-height:17px;color:#444;letter-spacing:-0.052px;">Sales and Marketing (group members)</span>
<span class="t" style="left:1223.0px;top:456.5px;font-size:12.2px;line-height:17px;color:#111;letter-spacing:-0.183px;font-weight:bold;">Do not add the signature to emails sent by these users (exceptions from the list above):</span>
<div class="lb" style="top:481px"></div>
<div class="btn" style="left:1223px;top:651px;width:142px;border-color:#b6b6b6;"></div>
<svg style="position:absolute;left:1268px;top:660px;" width="14" height="14" viewBox="0 0 14 14" fill="none"><path d="M7 1.2 V12.8 M1.2 7 H12.8" stroke="#45a645" stroke-width="1.9"/></svg>
<span class="t" style="left:1291.5px;top:659.8px;font-size:12.2px;line-height:17px;color:#222;letter-spacing:-0.495px;">Add...</span>
<div class="btn" style="left:1377px;top:651px;width:142px;border-color:#c4c4c4;"></div>
<svg style="position:absolute;left:1417px;top:661px;" width="12" height="12" viewBox="0 0 12 12" fill="none"><path d="M1.5 1.5 L10.5 10.5 M10.5 1.5 L1.5 10.5" stroke="#a8a8a8" stroke-width="2"/></svg>
<span class="t" style="left:1439.5px;top:659.8px;font-size:12.2px;line-height:17px;color:#a0a0a0;letter-spacing:-0.786px;">Remove</span>
<div class="btn" style="left:1531px;top:651px;width:142px;border-color:#c4c4c4;"></div>
<svg style="position:absolute;left:1581px;top:660px;" width="14" height="14" viewBox="0 0 14 14" fill="none"><path d="M2 12 L2.8 9 L10.2 1.6 L12.4 3.8 L5 11.2 Z" stroke="#a8a8a8" stroke-width="1.1" stroke-linejoin="round"/></svg>
<span class="t" style="left:1604.0px;top:659.8px;font-size:12.2px;line-height:17px;color:#a0a0a0;letter-spacing:-0.341px;">Edit</span>
<div class="btn" style="left:1223px;top:391px;width:142px;border-color:#5ea7f8;"></div>
<svg style="position:absolute;left:1268px;top:400px;" width="14" height="14" viewBox="0 0 14 14" fill="none"><path d="M7 1.2 V12.8 M1.2 7 H12.8" stroke="#45a645" stroke-width="1.9"/></svg>
<span class="t" style="left:1291.5px;top:399.8px;font-size:12.2px;line-height:17px;color:#222;letter-spacing:-0.495px;">Add...</span>
<div class="btn" style="left:1377px;top:391px;width:142px;border-color:#b6b6b6;"></div>
<svg style="position:absolute;left:1417px;top:401px;" width="12" height="12" viewBox="0 0 12 12" fill="none"><path d="M1.5 1.5 L10.5 10.5 M10.5 1.5 L1.5 10.5" stroke="#d8430f" stroke-width="2"/></svg>
<span class="t" style="left:1439.5px;top:399.8px;font-size:12.2px;line-height:17px;color:#222;letter-spacing:-0.786px;">Remove</span>
<div class="btn" style="left:1531px;top:391px;width:142px;border-color:#b6b6b6;"></div>
<svg style="position:absolute;left:1581px;top:400px;" width="14" height="14" viewBox="0 0 14 14" fill="none"><path d="M2 12 L2.8 9 L10.2 1.6 L12.4 3.8 L5 11.2 Z" stroke="#555" stroke-width="1.1" stroke-linejoin="round"/></svg>
<span class="t" style="left:1604.0px;top:399.8px;font-size:12.2px;line-height:17px;color:#222;letter-spacing:-0.341px;">Edit</span>
<div style="position:absolute;left:1223px;top:423px;width:312px;height:131px;background:#fff;box-shadow:0 2px 5px rgba(0,0,0,0.3);"></div>
<svg style="position:absolute;left:1240.5px;top:438.6px;" width="17" height="12" viewBox="0 0 17 12" fill="none"><path d="M8.5 6 C7 3.8 5.7 3 4.1 3 C2.2 3 0.9 4.3 0.9 6 C0.9 7.7 2.2 9 4.1 9 C5.7 9 7 8.2 8.5 6 C10 3.8 11.3 3 12.9 3 C14.8 3 16.1 4.3 16.1 6 C16.1 7.7 14.8 9 12.9 9 C11.3 9 10 8.2 8.5 6 Z" stroke="#7a7a7a" stroke-width="1.25"/></svg>
<span class="t" style="left:1274.0px;top:434.2px;font-size:14px;line-height:20px;color:#333;letter-spacing:-0.026px;">All senders</span>
<svg style="position:absolute;left:1241px;top:468.2px;" width="17" height="15" viewBox="0 0 17 15" fill="none"><circle cx="4.8" cy="3.6" r="2.2" stroke="#7a7a7a" stroke-width="1"/><path d="M0.8 10.8 Q1.2 7.4 4.8 7.4 Q8.4 7.4 8.8 10.8 Z" stroke="#7a7a7a" stroke-width="1" stroke-linejoin="round"/><path d="M11 6.5 L11 13.5 L12.8 11.8 L14 14.3 L15 13.8 L13.8 11.4 L16 11.2 Z" fill="#555"/></svg>
<span class="t" style="left:1274.0px;top:464.3px;font-size:14px;line-height:20px;color:#333;letter-spacing:-0.112px;">Selected senders</span>
<svg style="position:absolute;left:1242px;top:499.2px;" width="15" height="14" viewBox="0 0 15 14" fill="none"><circle cx="4.5" cy="5.2" r="2.3" stroke="#7a7a7a" stroke-width="1"/><path d="M0.8 12.5 Q1.2 9 4.5 9 Q7.8 9 8.2 12.5 Z" stroke="#7a7a7a" stroke-width="1" stroke-linejoin="round"/><circle cx="10.8" cy="2.6" r="1.5" stroke="#7a7a7a" stroke-width="1"/><path d="M8.2 7.6 Q8.6 5.4 10.8 5.4 Q13 5.4 13.4 7.6 Z" stroke="#7a7a7a" stroke-width="1" stroke-linejoin="round"/></svg>
<span class="t" style="left:1274.0px;top:495.3px;font-size:14px;line-height:20px;color:#333;letter-spacing:0.173px;">Group members (inside organization)</span>
<svg style="position:absolute;left:1241px;top:529.2px;" width="17" height="14" viewBox="0 0 17 14" fill="none"><circle cx="4.8" cy="3.6" r="2.2" stroke="#7a7a7a" stroke-width="1"/><path d="M0.8 10.8 Q1.2 7.4 4.8 7.4 Q8.4 7.4 8.8 10.8 Z" stroke="#7a7a7a" stroke-width="1" stroke-linejoin="round"/><path d="M10 7 H16 L13.6 9.6 V12.6 L12.4 11.8 V9.6 Z" fill="#555"/></svg>
<span class="t" style="left:1274.0px;top:525.3px;font-size:14px;line-height:20px;color:#333;letter-spacing:0.252px;">Azure AD filter</span>
<div class="bb" style="left:1452px"></div>
<span class="t" style="left:1508.5px;top:994.1px;font-size:14.6px;line-height:20px;color:#fff;letter-spacing:-0.486px;">Back</span>
<div class="bb" style="left:1603px"></div>
<span class="t" style="left:1659.5px;top:994.1px;font-size:14.6px;line-height:20px;color:#fff;letter-spacing:0.160px;">Next</span>
<div class="bb" style="left:1754px"></div>
<span class="t" style="left:1776.5px;top:994.1px;font-size:14.6px;line-height:20px;color:#fff;letter-spacing:-0.001px;">Save &amp; Publish</span>
</body></html>
